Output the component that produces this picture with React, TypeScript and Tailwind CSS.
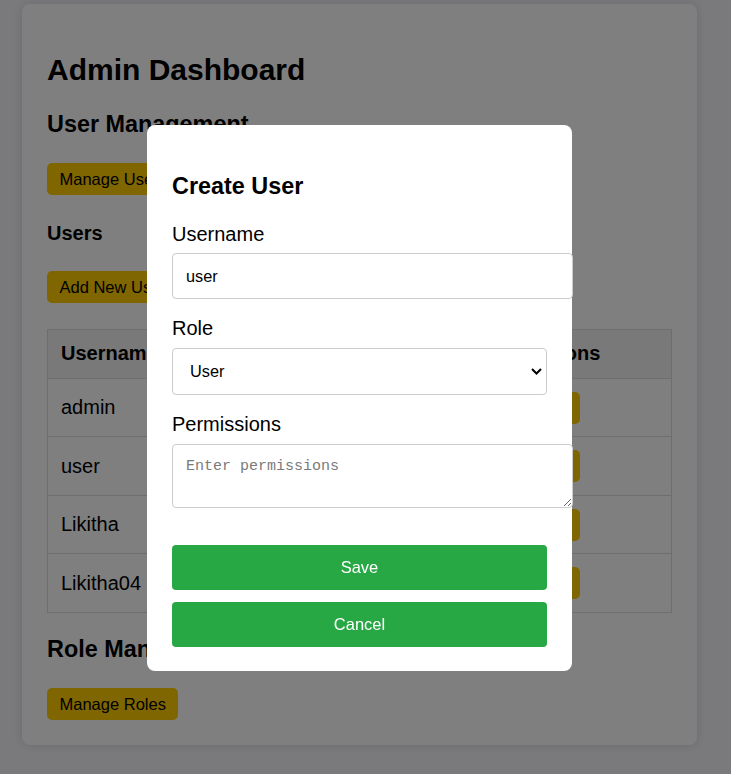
import React from "react";

const users = ["admin", "user", "Likitha", "Likitha04"];
const roles = ["Admin", "User", "User", "User"];

export default function App() {
  return (
    <div
      className="relative min-h-screen bg-[#f4f4f8] text-black"
      style={{ fontFamily: '"Liberation Sans", Arial, sans-serif' }}
    >
      <div className="pt-[4px] pl-[22px] pb-[30px]">
        <div className="w-[675px] rounded-[8px] bg-white px-[25px] pt-[49px] pb-[25px] shadow-[0_0_10px_rgba(0,0,0,0.12)]">
          <h1 className="text-[30px] leading-[34px] font-bold">Admin Dashboard</h1>
          <h2 className="mt-[24px] text-[23.4px] leading-[27px] font-bold">User Management</h2>
          <button className="mt-[25px] block h-[32px] rounded-[5px] bg-[#ffcc00] px-[12.5px] text-[16.5px] text-black">
            Manage Users
          </button>
          <h3 className="mt-[26.6px] text-[20px] leading-[23px] font-bold">Users</h3>
          <button className="mt-[26.4px] block h-[32px] rounded-[5px] bg-[#ffcc00] px-[12.5px] text-[16.5px] text-black">
            Add New User
          </button>
          <table className="mt-[26px] w-[624px] table-fixed border-collapse text-[20px]">
            <colgroup>
              <col className="w-[153px]" />
              <col className="w-[130px]" />
              <col className="w-[183px]" />
              <col className="w-[158px]" />
            </colgroup>
            <thead>
              <tr className="bg-[#f2f2f2]">
                <th className="h-[49px] border border-[#dddddd] px-[13px] text-left font-bold leading-[23px]">Username</th>
                <th className="border border-[#dddddd] px-[13px] text-left font-bold leading-[23px]">Role</th>
                <th className="border border-[#dddddd] px-[13px] text-left font-bold leading-[23px]">Permissions</th>
                <th className="border border-[#dddddd] px-[13px] text-left font-bold leading-[23px]">Actions</th>
              </tr>
            </thead>
            <tbody>
              {users.map((u, i) => (
                <tr key={u}>
                  <td className="h-[58.5px] border border-[#dddddd] px-[13px] leading-[23px]">{u}</td>
                  <td className="border border-[#dddddd] px-[13px] leading-[23px]">{roles[i]}</td>
                  <td className="border border-[#dddddd] px-[13px] leading-[23px]">read</td>
                  <td className="border border-[#dddddd] px-[13px] align-middle">
                    <button className="block h-[32px] rounded-[5px] bg-[#ffcc00] px-[12.5px] text-[16.5px] text-black">
                      Edit
                    </button>
                  </td>
                </tr>
              ))}
            </tbody>
          </table>
          <h2 className="mt-[23px] text-[23.4px] leading-[27px] font-bold">Role Management</h2>
          <button className="mt-[25px] block h-[32px] rounded-[5px] bg-[#ffcc00] px-[12.5px] text-[16.5px] text-black">
            Manage Roles
          </button>
        </div>
      </div>

      <div className="fixed inset-0 bg-black/50" />

      <div className="absolute left-[147px] top-[125px] w-[425px] rounded-[8px] bg-white px-[25px] pt-[48px] pb-[24px]">
        <h3 className="text-[23.4px] leading-[27px] font-bold">Create User</h3>
        <label className="mt-[23px] block text-[20px] leading-[23px]">Username</label>
        <input
          className="mt-[7px] block h-[46px] w-[401px] rounded-[4px] border border-[#cccccc] px-[13px] text-[16.3px] outline-none"
          defaultValue="user"
        />
        <label className="mt-[18px] block text-[20px] leading-[23px]">Role</label>
        <div className="relative mt-[8px] h-[47px] w-[375px]">
          <select
            className="block h-[47px] w-[375px] appearance-none rounded-[4px] border border-[#cccccc] bg-white pl-[17px] text-[16.3px] text-black outline-none"
            defaultValue="User"
          >
            <option>Admin</option>
            <option>User</option>
          </select>
          <svg
            className="pointer-events-none absolute right-[5px] top-[20px]"
            width="11"
            height="7"
            viewBox="0 0 11 7"
          >
            <polyline points="1,1 5.5,5.5 10,1" fill="none" stroke="#000" strokeWidth="2" />
          </svg>
        </div>
        <label className="mt-[18px] block text-[20px] leading-[23px]">Permissions</label>
        <textarea
          className="mt-[8px] block h-[64px] w-[401px] rounded-[4px] border border-[#cccccc] px-[13px] pt-[13px] text-[15px] leading-[18px] outline-none placeholder:text-[#7a7a7a]"
          style={{ fontFamily: '"Liberation Mono", monospace' }}
          placeholder="Enter permissions"
        />
        <button className="mt-[37px] block h-[45px] w-[375px] rounded-[4px] bg-[#28a745] text-[16.5px] text-white">
          Save
        </button>
        <button className="mt-[12px] block h-[45px] w-[375px] rounded-[4px] bg-[#28a745] text-[16.5px] text-white">
          Cancel
        </button>
      </div>
    </div>
  );
}
